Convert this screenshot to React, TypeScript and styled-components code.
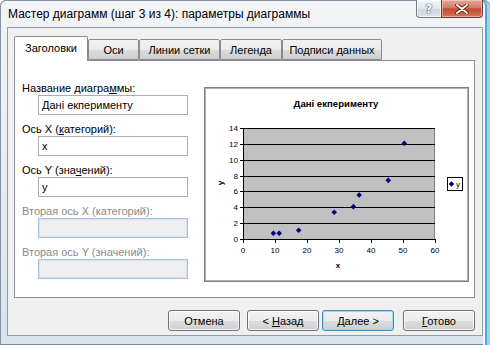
import React from "react";
import styled, { createGlobalStyle } from "styled-components";

const UI_FONT = `"Liberation Sans", Arial, sans-serif`;

const GlobalStyle = createGlobalStyle`
  html, body {
    margin: 0;
    padding: 0;
    overflow: hidden;
    background: #ffffff;
  }
  * {
    box-sizing: border-box;
  }
`;

type Tab = { title: string; width: number; active?: boolean };

const tabs: Tab[] = [
  { title: "Заголовки", width: 74, active: true },
  { title: "Оси", width: 51 },
  { title: "Линии сетки", width: 81 },
  { title: "Легенда", width: 62 },
  { title: "Подписи данных", width: 100 },
];

// точки ряда "y"
const points: [number, number][] = [
  [9.5, 0.72],
  [11.3, 0.72],
  [17.4, 1.1],
  [28.5, 3.37],
  [34.5, 4.08],
  [36.3, 5.55],
  [45.4, 7.4],
  [50.4, 12.07],
];

function ScatterChart() {
  const L = 38;
  const R = 230;
  const T = 40;
  const B = 151;
  const sx = (v: number) => L + (v * (R - L)) / 60;
  const sy = (v: number) => B - (v * (B - T)) / 14;
  const yTicks = [0, 2, 4, 6, 8, 10, 12, 14];
  const xTicks = [0, 10, 20, 30, 40, 50, 60];
  const diamond = (x: number, y: number, r = 2.8) =>
    `${x},${y - r} ${x + r},${y} ${x},${y + r} ${x - r},${y}`;

  return (
    <svg width={263} height={193} viewBox="0 0 263 193">
      <text
        x={131}
        y={19}
        textAnchor="middle"
        fontFamily={UI_FONT}
        fontWeight="bold"
        fontSize={9.6}
        fill="#000"
      >
        Дані екперименту
      </text>

      <rect x={L} y={T} width={R - L} height={B - T} fill="#c0c0c0" />
      <line x1={R - 0.5} y1={T} x2={R - 0.5} y2={B} stroke="#808080" />
      {yTicks.slice(1).map((v) => (
        <line
          key={v}
          x1={L}
          x2={R}
          y1={Math.round(sy(v)) + 0.5}
          y2={Math.round(sy(v)) + 0.5}
          stroke="#000"
        />
      ))}
      <line x1={L + 0.5} y1={T} x2={L + 0.5} y2={B + 1} stroke="#000" />
      <line x1={L - 3} y1={B + 0.5} x2={R} y2={B + 0.5} stroke="#000" />
      {yTicks.map((v) => (
        <g key={v}>
          <line
            x1={L - 3}
            x2={L}
            y1={Math.round(sy(v)) + 0.5}
            y2={Math.round(sy(v)) + 0.5}
            stroke="#000"
          />
          <text
            x={33}
            y={sy(v) + 3}
            textAnchor="end"
            fontFamily={UI_FONT}
            fontSize={8}
            fill="#000"
          >
            {v}
          </text>
        </g>
      ))}
      {xTicks.map((v) => (
        <g key={v}>
          <line
            x1={Math.round(sx(v)) + 0.5}
            x2={Math.round(sx(v)) + 0.5}
            y1={B}
            y2={B + 4}
            stroke="#000"
          />
          <text
            x={sx(v)}
            y={165}
            textAnchor="middle"
            fontFamily={UI_FONT}
            fontSize={8}
            fill="#000"
          >
            {v}
          </text>
        </g>
      ))}

      <text
        x={133}
        y={180}
        textAnchor="middle"
        fontFamily={UI_FONT}
        fontWeight="bold"
        fontSize={8}
        fill="#000"
      >
        x
      </text>
      <text
        x={0}
        y={0}
        transform="translate(18 95) rotate(-90)"
        textAnchor="middle"
        fontFamily={UI_FONT}
        fontWeight="bold"
        fontSize={8}
        fill="#000"
      >
        y
      </text>

      {points.map(([x, y], i) => (
        <polygon key={i} points={diamond(sx(x), sy(y))} fill="#000080" />
      ))}

      <rect x={242.5} y={89.5} width={15} height={13} fill="#fff" stroke="#000" />
      <polygon points={diamond(246.5, 96)} fill="#000080" />
      <text x={251} y={99} fontFamily={UI_FONT} fontSize={8} fill="#000">
        y
      </text>
    </svg>
  );
}

function CloseGlyph() {
  return (
    <svg width={14} height={10} viewBox="0 0 14 10">
      <path d="M2 1 L12 9 M12 1 L2 9" stroke="#5b1d12" strokeWidth={3.6} strokeLinecap="round" />
      <path d="M2 1 L12 9 M12 1 L2 9" stroke="#ffffff" strokeWidth={2} strokeLinecap="round" />
    </svg>
  );
}

export default function App() {
  return (
    <>
      <GlobalStyle />
      <Window>
        <TitleBar>
          <TitleText>Мастер диаграмм (шаг 3 из 4): параметры диаграммы</TitleText>
          <CaptionButtons>
            <HelpButton>?</HelpButton>
            <CloseButton>
              <CloseGlyph />
            </CloseButton>
          </CaptionButtons>
        </TitleBar>

        <Client>
          <TabStrip>
            {tabs.map((t) => (
              <TabButton key={t.title} $w={t.width} $active={!!t.active}>
                {t.title}
              </TabButton>
            ))}
          </TabStrip>

          <Panel>
            <FormColumn>
              <Field>
                <Label>
                  Название диагра<u>м</u>мы:
                </Label>
                <TextBox defaultValue="Дані екперименту" />
              </Field>
              <Field>
                <Label>
                  Ось X (<u>к</u>атегорий):
                </Label>
                <TextBox defaultValue="x" />
              </Field>
              <Field>
                <Label>
                  Ось Y (зна<u>ч</u>ений):
                </Label>
                <TextBox defaultValue="y" />
              </Field>
              <Field>
                <Label $disabled>Вторая ось X (категорий):</Label>
                <TextBox disabled />
              </Field>
              <Field>
                <Label $disabled>Вторая ось Y (значений):</Label>
                <TextBox disabled />
              </Field>
            </FormColumn>

            <ChartBox>
              <ScatterChart />
            </ChartBox>
          </Panel>

          <ButtonRow>
            <DialogButton $gap={0}>
              <span>Отмена</span>
            </DialogButton>
            <DialogButton $gap={7}>
              <span>
                &lt; <u>Н</u>азад
              </span>
            </DialogButton>
            <DialogButton $gap={3} $focused>
              <span>
                <u>Д</u>алее &gt;
              </span>
            </DialogButton>
            <DialogButton $gap={9}>
              <span>
                <u>Г</u>отово
              </span>
            </DialogButton>
          </ButtonRow>
        </Client>
      </Window>
    </>
  );
}

const Window = styled.div`
  width: 490px;
  height: 345px;
  display: flex;
  flex-direction: column;
  padding: 0 7px 9px 7px;
  border-radius: 6px 6px 0 0;
  background: linear-gradient(180deg, #f2f4f7 0%, #e7ebf0 55%, #d9e3ed 100%);
  box-shadow: inset 1px 0 0 #8593a2, inset 0 1px 0 #8593a2,
    inset -3px 0 0 #b8c9da, inset -5px 0 0 #36b2e8, inset -7px 0 0 #f5f8fb,
    inset 0 -1px 0 #7d8a98;
  font-family: ${UI_FONT};
  color: #000;
`;

const TitleBar = styled.div`
  height: 27px;
  display: flex;
  align-items: flex-start;
  flex-shrink: 0;
`;

const TitleText = styled.div`
  padding-left: 1px;
  line-height: 29px;
  font-size: 12px;
  color: #000;
  white-space: nowrap;
`;

const CaptionButtons = styled.div`
  margin-left: auto;
  display: flex;
  height: 18px;
`;

const HelpButton = styled.div`
  width: 25px;
  height: 18px;
  border: 1px solid #6f7b88;
  border-top: none;
  border-right: none;
  border-radius: 0 0 0 4px;
  background: linear-gradient(180deg, #f4f6f8 0%, #e2e6ea 50%, #cfd5dc 51%, #dde2e7 100%);
  box-shadow: inset 0 0 0 1px rgba(255, 255, 255, 0.7);
  display: flex;
  align-items: center;
  justify-content: center;
  font-family: "DejaVu Sans", sans-serif;
  font-weight: bold;
  font-size: 12px;
  color: #ffffff;
  text-shadow: 0 0 1px #4a5560, 0 0 1px #4a5560, 0 0 1px #4a5560;
`;

const CloseButton = styled.div`
  width: 42px;
  height: 18px;
  border: 1px solid #6b3a32;
  border-top: none;
  border-radius: 0 0 4px 0;
  background: linear-gradient(180deg, #e6aa9c 0%, #d47b68 45%, #c24a30 52%, #d6735c 100%);
  box-shadow: inset 0 0 0 1px rgba(255, 220, 210, 0.5);
  display: flex;
  align-items: center;
  justify-content: center;
`;

const Client = styled.div`
  flex: 1;
  display: flex;
  flex-direction: column;
  background: #f0f0f0;
  border: 1px solid #8e9cab;
  padding: 8px 7px 4px 6px;
`;

const TabStrip = styled.div`
  height: 24px;
  display: flex;
  align-items: flex-end;
  flex-shrink: 0;
`;

const TabButton = styled.div<{ $w: number; $active: boolean }>`
  width: ${(p) => p.$w}px;
  height: ${(p) => (p.$active ? 25 : 21)}px;
  margin-bottom: ${(p) => (p.$active ? -1 : 0)}px;
  position: relative;
  z-index: ${(p) => (p.$active ? 1 : 0)};
  display: flex;
  align-items: center;
  justify-content: center;
  padding-bottom: ${(p) => (p.$active ? 2 : 0)}px;
  border: 1px solid #898c95;
  border-bottom: ${(p) => (p.$active ? "none" : "1px solid #898c95")};
  border-radius: 2px 2px 0 0;
  background: ${(p) =>
    p.$active
      ? "#ffffff"
      : "linear-gradient(180deg, #f2f2f2 0%, #ebebeb 50%, #dddddd 51%, #cfcfcf 100%)"};
  font-size: 11px;
  white-space: nowrap;
`;

const Panel = styled.div`
  height: 238px;
  flex-shrink: 0;
  display: flex;
  align-items: flex-start;
  background: #ffffff;
  border: 1px solid #898c95;
  padding: 20px 5px 0 7px;
`;

const FormColumn = styled.div`
  width: 172px;
  display: flex;
  flex-direction: column;
  gap: 7px;
`;

const Field = styled.div`
  display: flex;
  flex-direction: column;
`;

const Label = styled.div<{ $disabled?: boolean }>`
  height: 14px;
  line-height: 14px;
  font-size: 11px;
  color: ${(p) => (p.$disabled ? "#8a8a8a" : "#000")};
  white-space: nowrap;
`;

const TextBox = styled.input`
  margin-left: 16px;
  width: 150px;
  height: 20px;
  padding: 0 3px;
  border: 1px solid #a9aeb6;
  background: #ffffff;
  font-family: ${UI_FONT};
  font-size: 11px;
  color: #000;
  outline: none;

  &:disabled {
    border-color: #a9c3de;
    box-shadow: inset 0 0 0 1px #d4e2ef;
    background: #efefef;
  }
`;

const ChartBox = styled.div`
  margin-left: auto;
  margin-top: 6px;
  width: 265px;
  height: 195px;
  border: 1px solid #808080;
  box-shadow: inset 0 0 0 1px #b0b0b0;
  background: #ffffff;
  display: flex;
`;

const ButtonRow = styled.div`
  margin-top: 12px;
  display: flex;
  justify-content: flex-end;
`;

const DialogButton = styled.div<{ $gap: number; $focused?: boolean }>`
  margin-left: ${(p) => p.$gap}px;
  width: 72px;
  height: 21px;
  display: flex;
  align-items: center;
  justify-content: center;
  border: 1px solid ${(p) => (p.$focused ? "#3c8fc4" : "#707070")};
  border-radius: 3px;
  background: linear-gradient(180deg, #f2f2f2 0%, #ebebeb 50%, #dddddd 51%, #cfcfcf 100%);
  box-shadow: ${(p) =>
    p.$focused
      ? "inset 0 0 0 1px #9fdcf6"
      : "inset 0 0 0 1px rgba(255, 255, 255, 0.8)"};
  font-size: 11px;
  white-space: nowrap;
`;
